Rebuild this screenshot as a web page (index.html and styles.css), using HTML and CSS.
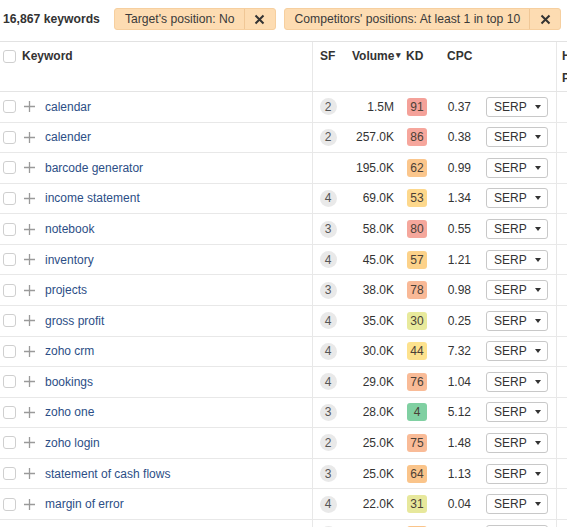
FILE: index.html
```html
<!DOCTYPE html>
<html lang="en">
<head>
<meta charset="utf-8">
<title>Keywords</title>
<link rel="stylesheet" href="styles.css">
</head>
<body>
<div class="page">
  <div class="topbar">
    <span class="count">16,867 keywords</span>
    <span class="chip"><span class="chip-text">Target's position: No</span><span class="chip-x"><svg width="11" height="11" viewBox="0 0 11 11"><path d="M1.5 1.5L9.5 9.5M9.5 1.5L1.5 9.5" stroke="#333" stroke-width="2" fill="none"/></svg></span></span>
    <span class="chip"><span class="chip-text">Competitors' positions: At least 1 in top 10</span><span class="chip-x"><svg width="11" height="11" viewBox="0 0 11 11"><path d="M1.5 1.5L9.5 9.5M9.5 1.5L1.5 9.5" stroke="#333" stroke-width="2" fill="none"/></svg></span></span>
  </div>

  <div class="row head">
    <div class="c-kw"><span class="cb"></span><span class="hk">Keyword</span></div>
    <div class="c-sf">SF</div>
    <div class="c-vol">Volume<span class="caret">&#9662;</span></div>
    <div class="c-kd">KD</div>
    <div class="c-cpc">CPC</div>
    <div class="c-serp"></div>
    <div class="c-last">Highest<br>Position</div>
  </div>

  <div id="rows"></div>
</div>
<script src="app.js"></script>
</body>
</html>
```

FILE: app.js
```js
const data = [
  ["calendar", 2, "1.5M", 91, "0.37", "#f4a199"],
  ["calender", 2, "257.0K", 86, "0.38", "#f6a69c"],
  ["barcode generator", "", "195.0K", 62, "0.99", "#fbc68c"],
  ["income statement", 4, "69.0K", 53, "1.34", "#fdd88c"],
  ["notebook", 3, "58.0K", 80, "0.55", "#f5a79c"],
  ["inventory", 4, "45.0K", 57, "1.21", "#fcd28a"],
  ["projects", 3, "38.0K", 78, "0.98", "#f9b997"],
  ["gross profit", 4, "35.0K", 30, "0.25", "#e8ea9c"],
  ["zoho crm", 4, "30.0K", 44, "7.32", "#fde28e"],
  ["bookings", 4, "29.0K", 76, "1.04", "#f9bb97"],
  ["zoho one", 3, "28.0K", 4, "5.12", "#80d0a2"],
  ["zoho login", 2, "25.0K", 75, "1.48", "#f9bb97"],
  ["statement of cash flows", 3, "25.0K", 64, "1.13", "#fac48a"],
  ["margin of error", 4, "22.0K", 31, "0.04", "#e7e89c"],
  ["", " ", "", "", "", "#fac48a", true]
];
const rows = document.getElementById("rows");
const plus = '<svg width="11" height="11" viewBox="0 0 11 11"><path d="M5.5 0V11M0 5.5H11" stroke="#9a9a9a" stroke-width="1.3" fill="none"/></svg>';
rows.innerHTML = data.map(d => `
  <div class="row">
    <div class="c-kw"><span class="cb"></span><span class="plus">${plus}</span><a class="kw" href="#">${d[0]}</a></div>
    <div class="c-sf">${d[1] !== "" ? `<span class="sf">${d[1]}</span>` : ""}</div>
    <div class="c-vol">${d[2]}</div>
    <div class="c-kd"><span class="kd" style="background:${d[5]}">${d[3]}</span></div>
    <div class="c-cpc">${d[4]}</div>
    <div class="c-serp"><span class="serp">${d[6] ? "" : "SERP "}<span class="tri"></span></span></div>
    <div class="c-last"></div>
  </div>`).join("");
```

FILE: styles.css
```css
html, body {
  margin: 0;
  padding: 0;
  overflow: hidden;
  background: #fff;
}
body {
  font-family: "Liberation Sans", Arial, sans-serif;
  font-size: 12px;
  color: #333;
}
.page {
  width: 700px;
}
.topbar {
  height: 41px;
  display: flex;
  align-items: flex-start;
  border-bottom: 1px solid #e2e2e2;
  box-sizing: content-box;
}
.count {
  font-weight: bold;
  margin: 12px 0 0 3px;
  color: #333;
  font-size: 12.2px;
}
.chip {
  display: flex;
  height: 22px;
  margin-top: 8px;
  background: #fddcb2;
  border: 1px solid #f6cf9f;
  border-radius: 3px;
  box-sizing: border-box;
  align-items: stretch;
}
.count + .chip { margin-left: 14px; }
.chip + .chip { margin-left: 8px; }
.chip-text {
  padding: 0 9px 0 10px;
  line-height: 20px;
  font-size: 12.15px;
  color: #3a3a3a;
}
.chip-x {
  width: 30px;
  border-left: 1px solid #f0c796;
  display: flex;
  align-items: center;
  justify-content: center;
}
.row {
  display: grid;
  grid-template-columns: 313px 30px 51px 46px 31px 86px 143px;
  height: 30.57px;
  box-sizing: border-box;
  border-bottom: 1px solid #e8e8e8;
  align-items: center;
}
.row > div {
  height: 100%;
  display: flex;
  align-items: center;
  box-sizing: border-box;
  white-space: nowrap;
}
.row.head {
  height: 50px;
  align-items: start;
  font-weight: bold;
  line-height: 22px;
  border-bottom-color: #e4e4e4;
}
.row.head > div {
  align-items: flex-start;
  padding-top: 3px;
}
.c-kw {
  border-right: 1px solid #e8e8e8;
  padding-left: 3px;
}
.c-serp {
  border-right: 1px solid #e8e8e8;
}
.cb {
  width: 13px;
  height: 13px;
  border: 1px solid #cfcfcf;
  border-radius: 3px;
  box-sizing: border-box;
  background: #fff;
  flex: none;
}
.head .cb { margin-top: 5px; }
.hk { margin-left: 6px; }
.plus {
  margin-left: 8px;
  display: flex;
  width: 11px;
  height: 11px;
}
.kw {
  margin-left: 10px;
  color: #2c4e86;
  text-decoration: none;
  font-size: 12px;
}
.row:not(.head) .c-sf { justify-content: center; }
.head .c-sf { padding-left: 7px; }
.sf {
  width: 17px;
  height: 17px;
  border-radius: 50%;
  background: #e9e9e9;
  color: #555;
  display: flex;
  align-items: center;
  justify-content: center;
  font-size: 12px;
}
.row:not(.head) .c-vol { justify-content: flex-end; }
.head .c-vol { padding-left: 9px; overflow: visible; }
.caret { font-size: 9px; margin-left: 2px; position: relative; top: -1px; }
.c-kd { padding-left: 13px; }
.head .c-kd { padding-left: 12px; }
.kd {
  width: 20px;
  height: 18px;
  border-radius: 3px;
  display: flex;
  align-items: center;
  justify-content: center;
  color: #4a4036;
  font-size: 12px;
}
.row:not(.head) .c-cpc { justify-content: flex-end; }
.head .c-cpc { padding-left: 7px; }
.c-serp { padding-left: 15px; }
.serp {
  width: 62px;
  height: 20px;
  border: 1px solid #c8c8c8;
  border-radius: 3px;
  box-sizing: border-box;
  display: flex;
  align-items: center;
  padding-left: 7px;
  color: #333;
  font-size: 12px;
  background: #fff;
}
.tri {
  width: 0;
  height: 0;
  border-left: 3.5px solid transparent;
  border-right: 3.5px solid transparent;
  border-top: 4px solid #333;
  margin-left: 8px;
}
.head .c-last { padding-left: 5px; }
```
